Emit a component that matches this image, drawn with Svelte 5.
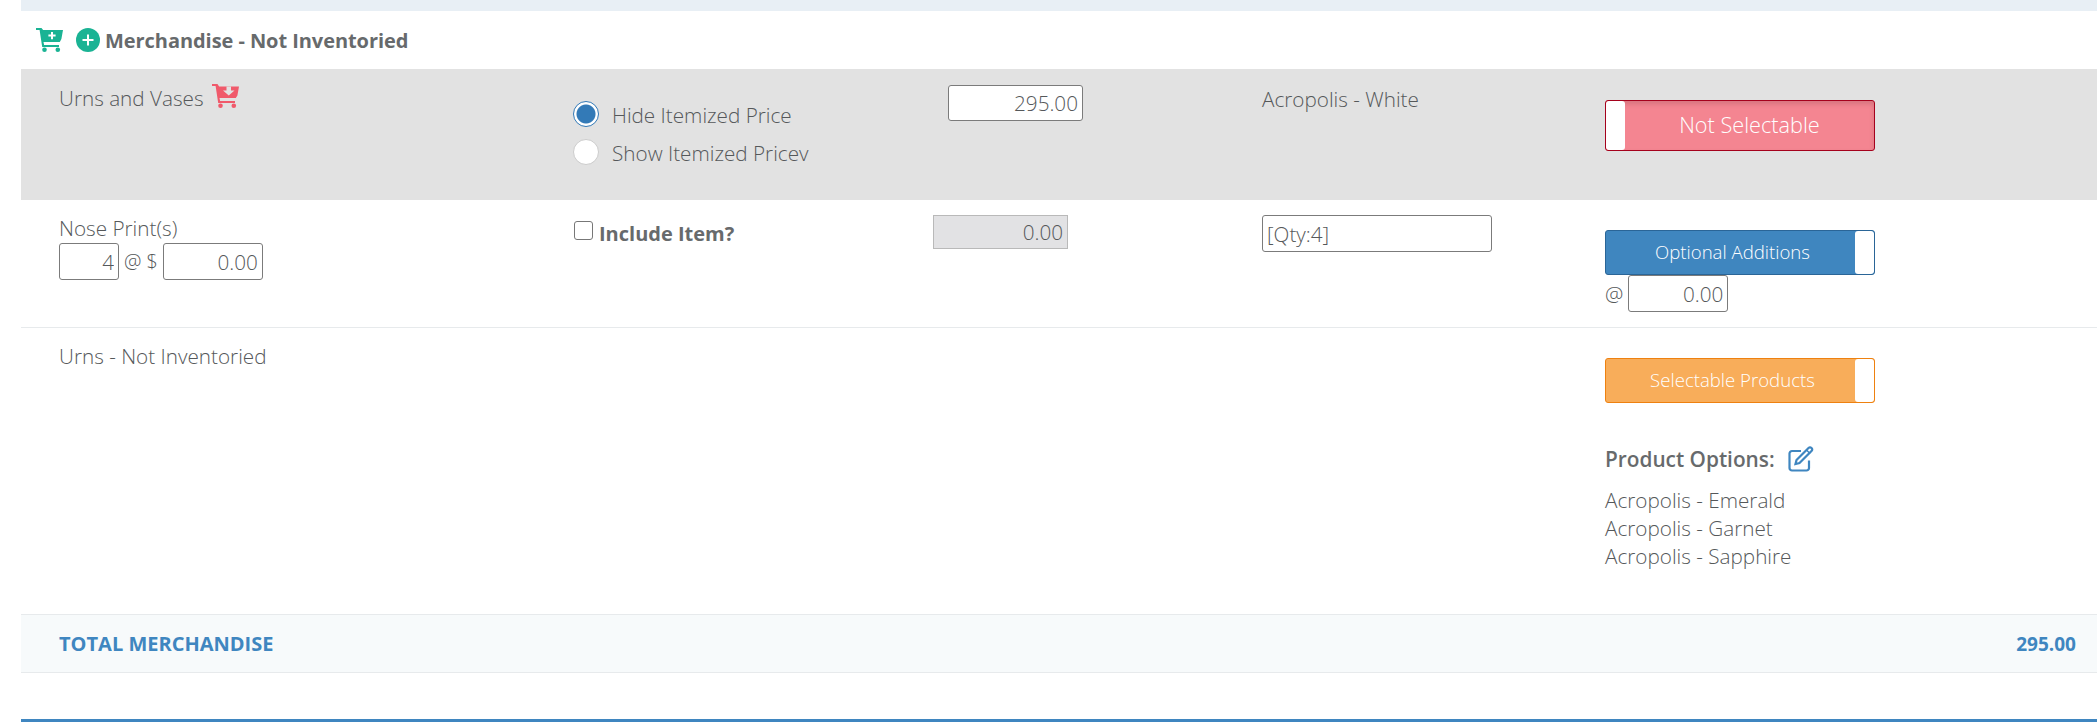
<script>
  let options = ["Acropolis - Emerald", "Acropolis - Garnet", "Acropolis - Sapphire"];
</script>

<div class="page">
  <div class="strip"></div>

  <div class="head">
    <svg class="cart" viewBox="0 0 27 24" width="27" height="24">
      <path fill="#1ab394" d="M0 0h5.500l1.600 2H27l-1.600 9-1.600 3H7.500l.6 3H23v2H6.200L3.600 2H0z" />
      <path fill="#fff" d="M15 4h2v2.600h2.600v2H17v2.600h-2V8.600h-2.600v-2H15z" />
      <path fill="#fff" d="M8 14h15.800v1.500H8z" />
      <circle fill="#1ab394" cx="8.500" cy="21.700" r="2.300" />
      <circle fill="#1ab394" cx="21.800" cy="21.700" r="2.300" />
    </svg>
    <svg class="plus" viewBox="0 0 24 24" width="24" height="24">
      <circle fill="#1ab394" cx="12" cy="12" r="12" />
      <path fill="#fff" d="M11 6.500h2V11h4.500v2H13v4.500h-2V13H6.500v-2H11z" />
    </svg>
    <strong>Merchandise - Not Inventoried</strong>
  </div>

  <div class="row gray">
    <div class="name">
      Urns and Vases
      <svg class="cart-red" viewBox="0 0 27 24" width="27" height="24">
        <path fill="#f05a6b" d="M0 0h5.500l1.600 2.500H27l-1.600 9-1.600 2.500H7.500l.6 3H23v2H6.200L3.600 2H0z" />
        <path fill="#e2e2e2" d="M14.500 2.500h4.500v4h3.500l-5.750 5-5.750-5h3.500z" />
        <path fill="#e2e2e2" d="M8 14h15.800v1.500H8z" />
        <circle fill="#f05a6b" cx="8.500" cy="21.700" r="2.300" />
        <circle fill="#f05a6b" cx="21.800" cy="21.700" r="2.300" />
      </svg>
    </div>
    <div class="radios">
      <label><input type="radio" name="itemized" checked /> Hide Itemized Price</label>
      <label><input type="radio" name="itemized" /> Show Itemized Pricev</label>
    </div>
    <div class="price"><input class="num wide shift" value="295.00" /></div>
    <div class="desc">Acropolis - White</div>
    <div class="action">
      <div class="toggle red tall"><span class="knob"></span><span class="label">Not Selectable</span></div>
    </div>
  </div>

  <div class="row second">
    <div class="name">
      Nose Print(s)
      <div class="qty">
        <input class="num small" value="4" />
        <span>@ $</span>
        <input class="num medium" value="0.00" />
      </div>
    </div>
    <div class="include">
      <input type="checkbox" />
      <strong>Include Item?</strong>
    </div>
    <div class="price"><input class="num wide disabled" value="0.00" disabled /></div>
    <div class="desc"><input class="note" value="[Qty:4]" /></div>
    <div class="action">
      <div class="toggle blue"><span class="label">Optional Additions</span><span class="knob"></span></div>
      <div class="at"><span>@</span><input class="num medium" value="0.00" /></div>
    </div>
  </div>

  <div class="row third">
    <div class="name">Urns - Not Inventoried</div>
    <div></div>
    <div></div>
    <div></div>
    <div class="action">
      <div class="toggle orange"><span class="label">Selectable Products</span><span class="knob"></span></div>
      <div class="opt-head">
        <strong>Product Options:</strong>
        <svg viewBox="0 0 26 26" width="26" height="26" fill="none" stroke="#3f86c0">
          <path stroke-width="2.200" d="M21 14.500V22a2.500 2.500 0 0 1-2.500 2.500H4A2.500 2.500 0 0 1 1.500 22V7.500A2.500 2.500 0 0 1 4 5h9" />
          <path stroke-width="2.200" d="M8.500 14 20.500 2c1-1 2-1 3 0s1 2 0 3L11.500 17l-4 1z" />
          <path stroke-width="1.500" d="M18.500 4l3.500 3.500" />
        </svg>
      </div>
      <ul>
        {#each options as option}
          <li>{option}</li>
        {/each}
      </ul>
    </div>
  </div>

  <div class="total">
    <strong>TOTAL MERCHANDISE</strong>
    <strong class="sum">295.00</strong>
  </div>

  <div class="bottom"></div>
</div>

<style>
  :global(body) {
    margin: 0;
    background: #fff;
  }
  .page {
    height: 722px;
    margin-left: 21px;
    overflow: hidden;
    font-family: "Open Sans", sans-serif;
    font-size: 20.7px;
    font-weight: 300;
    color: #55585a;
  }
  .strip {
    height: 11px;
    background: #e8eff5;
  }
  .head {
    height: 58px;
    display: flex;
    align-items: center;
    padding-left: 15px;
    font-size: 20px;
    color: #676a6c;
  }
  .head strong {
    font-weight: 700;
    margin-left: 5px;
    letter-spacing: -0.06px;
  }
  .plus {
    margin-left: 13px;
  }
  .row {
    display: grid;
    grid-template-columns: 552px 360px 329px 343px 1fr;
    box-sizing: border-box;
  }
  .gray {
    height: 131px;
    background: #e2e2e2;
  }
  .second {
    height: 128px;
    border-bottom: 1px solid #e7eaec;
  }
  .third {
    height: 286px;
  }
  .name {
    padding: 16px 0 0 38px;
    line-height: 24px;
  }
  .gray .name {
    padding-top: 15px;
  }
  .cart-red {
    vertical-align: -2px;
    margin-left: 3px;
  }
  .radios {
    padding-top: 33px;
    display: flex;
    flex-direction: column;
    gap: 13px;
  }
  .radios label {
    display: flex;
    align-items: center;
    height: 25px;
    gap: 13px;
  }
  .radios input {
    appearance: none;
    width: 26px;
    height: 26px;
    margin: -2px 0 0;
    border-radius: 50%;
    background: #fff;
    border: 1px solid #ccc;
    box-sizing: border-box;
  }
  .radios input:checked {
    border: 1px solid #337ab7;
    background: radial-gradient(circle, #337ab7 0 9px, #fff 10px);
  }
  input {
    font-family: inherit;
    font-weight: inherit;
    font-size: 20.7px;
    color: #55585a;
  }
  .num {
    text-align: right;
    box-sizing: border-box;
    border: 1px solid #7b7b7b;
    border-radius: 3px;
    background: #fff;
    padding: 0 4px;
    margin: 0;
    outline: none;
  }
  .wide {
    width: 135px;
    height: 36px;
  }
  .shift {
    margin-left: 15px;
  }
  .disabled {
    height: 34px;
    background: #e2e2e4;
    border-color: #b9b9b9;
    border-radius: 0;
  }
  .small {
    width: 60px;
    height: 37px;
  }
  .medium {
    width: 100px;
    height: 37px;
  }
  .price {
    padding-top: 16px;
  }
  .second .price {
    padding-top: 15px;
  }
  .desc {
    padding-top: 18px;
    line-height: 24px;
  }
  .second .desc {
    padding-top: 15px;
  }
  .note {
    width: 230px;
    height: 37px;
    box-sizing: border-box;
    border: 1px solid #7b7b7b;
    border-radius: 3px;
    padding: 0 4px;
    margin: 0;
    display: block;
  }
  .qty {
    display: flex;
    align-items: center;
    gap: 5px;
    margin-top: 3px;
  }
  .qty span {
    font-size: 19.7px;
  }
  .include {
    display: flex;
    align-items: flex-start;
    gap: 6px;
    padding-top: 21px;
    padding-left: 1px;
    font-size: 20px;
    color: #676a6c;
  }
  .include input {
    appearance: none;
    width: 19px;
    height: 19px;
    margin: 0;
    border: 1px solid #777;
    border-radius: 3px;
    background: #fff;
    box-sizing: border-box;
  }
  .include strong {
    font-weight: 700;
    line-height: 26px;
  }
  .action {
    width: 270px;
  }
  .gray .action {
    padding-top: 31px;
  }
  .second .action {
    padding-top: 30px;
  }
  .third .action {
    padding-top: 30px;
  }
  .toggle {
    display: flex;
    height: 45px;
    box-sizing: border-box;
    border: 1px solid;
    border-radius: 3px;
    overflow: hidden;
    color: #fff;
    font-size: 18.6px;
    line-height: 42px;
    font-weight: 300;
  }
  .tall {
    height: 51px;
    font-size: 21.7px;
    line-height: 47px;
  }
  .label {
    flex: 1;
    text-align: center;
  }
  .blue .label,
  .orange .label {
    padding-left: 4px;
  }
  .knob {
    width: 19px;
    background: #fff;
    border-radius: 3px;
  }
  .red {
    background: #f48591;
    border-color: #a5011c;
    box-shadow: inset 0 3px 5px rgba(0, 0, 0, 0.125);
  }
  .blue {
    background: #3f86bf;
    border-color: #2a6597;
  }
  .orange {
    background: #f8ad5a;
    border-color: #ee8110;
  }
  .at {
    display: flex;
    align-items: center;
    gap: 5px;
  }
  .opt-head {
    display: flex;
    align-items: center;
    gap: 13px;
    margin-top: 43px;
    height: 26px;
    color: #676a6c;
  }
  .opt-head strong {
    font-size: 20.8px;
    font-weight: 600;
  }
  ul {
    list-style: none;
    margin: 14px 0 0;
    padding: 0;
    line-height: 28px;
  }
  .total {
    height: 59px;
    box-sizing: border-box;
    display: flex;
    align-items: center;
    justify-content: space-between;
    padding: 0 21px 0 38px;
    background: #f7fafb;
    border-top: 1px solid #e7eaec;
    border-bottom: 1px solid #e7eaec;
    color: #3f86c0;
    font-size: 20px;
  }
  .total strong {
    font-weight: 700;
  }
  .total .sum {
    font-size: 19px;
  }
  .bottom {
    height: 3px;
    margin-top: 46px;
    background: #3f86c0;
  }
</style>
